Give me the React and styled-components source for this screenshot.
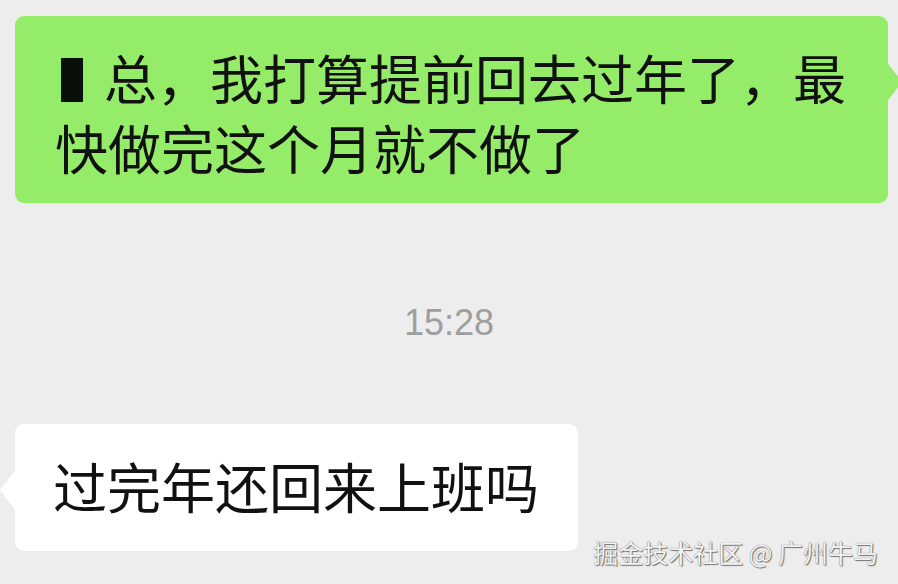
import React from "react"
import styled, { createGlobalStyle } from "styled-components"

const GlobalStyle = createGlobalStyle`
	html, body {
		margin: 0;
		padding: 0;
		background: #ededed;
	}
	* {
		box-sizing: border-box;
	}
`

const ChatPage = styled.div`
	position: relative;
	width: 898px;
	height: 584px;
	overflow: hidden;
	background: #ededed;
	display: flex;
	flex-direction: column;
	padding-top: 16px;
	font-family: "Noto Sans CJK SC", "Noto Sans", sans-serif;
`

const Bubble = styled.div`
	position: relative;
	width: ${(props) => props.width}px;
	align-self: ${(props) => (props.mine ? "flex-end" : "flex-start")};
	margin: ${(props) => (props.mine ? "0 10px 0 0" : "0 0 0 15px")};
	padding: ${(props) => props.padding};
	background: ${(props) => (props.mine ? "#95ec69" : "#ffffff")};
	border-radius: 9px;
	color: #111111;
	font-size: ${(props) => props.size}px;
	line-height: 70px;
	white-space: nowrap;

	&::after {
		content: "";
		position: absolute;
		top: 45px;
		${(props) => (props.mine ? "right: -14px;" : "left: -15px;")}
		width: 16px;
		height: 42px;
		background: ${(props) => (props.mine ? "#95ec69" : "#ffffff")};
		clip-path: ${(props) =>
			props.mine
				? "polygon(0 0, 100% 50%, 0 100%)"
				: "polygon(100% 0, 0 50%, 100% 100%)"};
	}
`

const Censor = styled.span`
	display: inline-block;
	width: 22px;
	height: 44px;
	margin: 0 21px 0 6px;
	background: #0a0f08;
	vertical-align: -2px;
`

const TimeStamp = styled.div`
	margin: 100px 0 81px;
	height: 40px;
	text-align: center;
	font-family: "Liberation Sans", Arial, sans-serif;
	font-size: 36px;
	line-height: 40px;
	color: #9e9e9e;
`

const Watermark = styled.div`
	position: absolute;
	right: 20px;
	bottom: 19px;
	font-family: "Noto Sans CJK SC", sans-serif;
	font-size: 25px;
	line-height: 26px;
	color: #f4f4f4;
	text-shadow: 0 0 1px #555555, 1px 1px 1px #777777;
`

export default function App() {
	return (
		<>
			<GlobalStyle />
			<ChatPage>
				<Bubble mine width={873} size={53} padding="26px 30px 21px 40px">
					<Censor />
					总，我打算提前回去过年了，最
					<br />
					快做完这个月就不做了
				</Bubble>
				<TimeStamp>15:28</TimeStamp>
				<Bubble width={563} size={54} padding="27px 30px 30px 38px">
					过完年还回来上班吗
				</Bubble>
				<Watermark>掘金技术社区 @ 广州牛马</Watermark>
			</ChatPage>
		</>
	)
}
